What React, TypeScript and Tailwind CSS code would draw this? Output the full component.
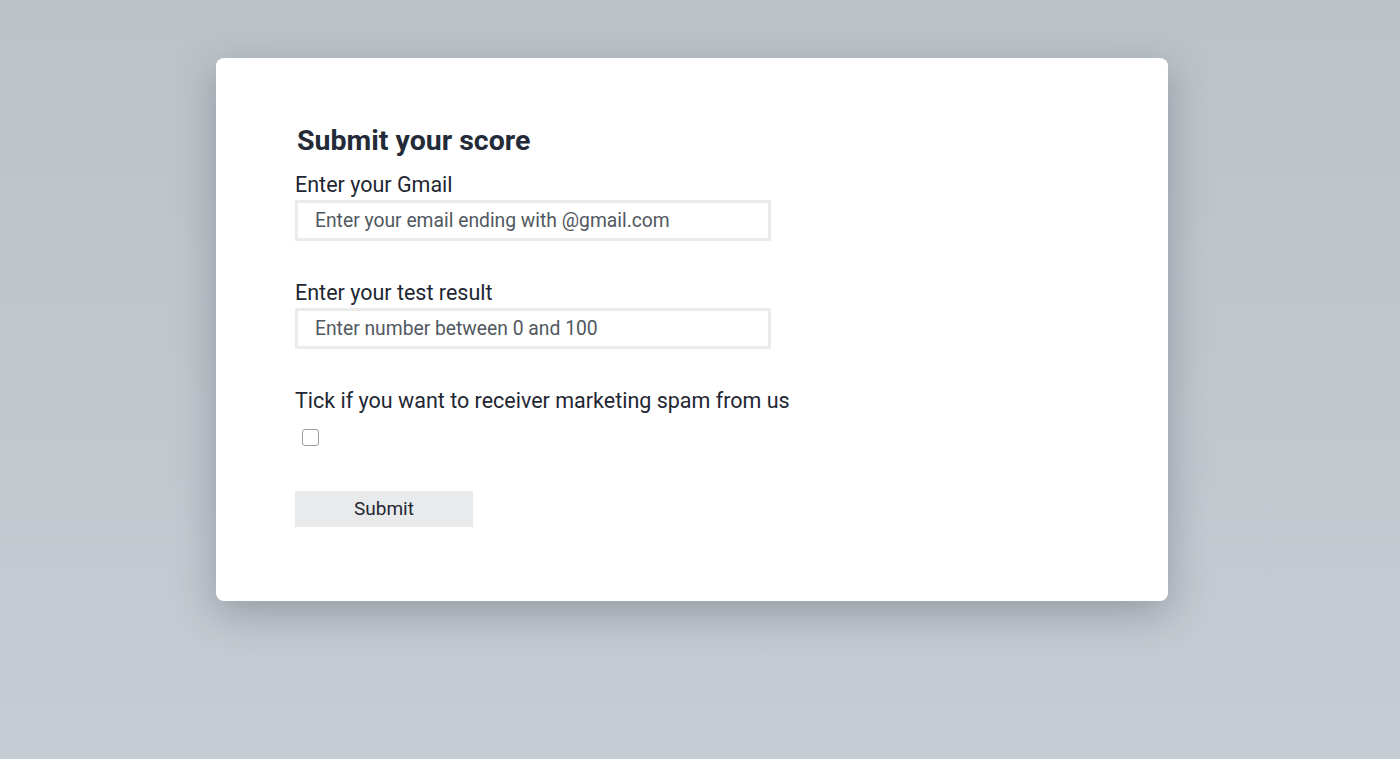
import React from "react";

export default function App() {
  return (
    <div
      className="w-[1400px] h-[759px] bg-gradient-to-b from-[#bcc2c8] to-[#c5ccd3] pt-[58px] pl-[216px]"
      style={{ fontFamily: "Roboto, 'Liberation Sans', sans-serif" }}
    >
      <div className="w-[952px] h-[543px] bg-white rounded-[8px] shadow-[0_12px_40px_rgba(60,70,80,0.35)] pl-[79px] pt-[66px]">
        <h1 className="text-[28.5px] leading-[34px] font-bold text-[#232b38] ml-[2px]">Submit your score</h1>
        <form className="flex flex-col">
          <label className="text-[21.5px] leading-[26px] text-[#1f2733] mt-[14px]">Enter your Gmail</label>
          <input
            className="mt-[2px] w-[476px] h-[41px] border-[3px] border-[#ebebeb] pl-[17px] text-[19.3px] text-[#4b5260] placeholder:text-[#51585f] outline-none"
            placeholder="Enter your email ending with @gmail.com"
          />
          <label className="text-[21.5px] leading-[26px] text-[#1f2733] mt-[39px]">Enter your test result</label>
          <input
            className="mt-[2px] w-[476px] h-[41px] border-[3px] border-[#ebebeb] pl-[17px] text-[19.3px] text-[#4b5260] placeholder:text-[#51585f] outline-none"
            placeholder="Enter number between 0 and 100"
          />
          <label className="text-[21.5px] leading-[26px] text-[#1f2733] mt-[39px]">Tick if you want to receiver marketing spam from us</label>
          <div className="mt-[15px] ml-[7px] w-[17px] h-[17px] border border-[#9a9da2] rounded-[3px] bg-white" />
          <button
            type="button"
            className="mt-[45px] w-[178px] h-[36px] bg-[#e9eaec] text-[19px] text-[#1f2733]"
          >
            Submit
          </button>
        </form>
      </div>
    </div>
  );
}
